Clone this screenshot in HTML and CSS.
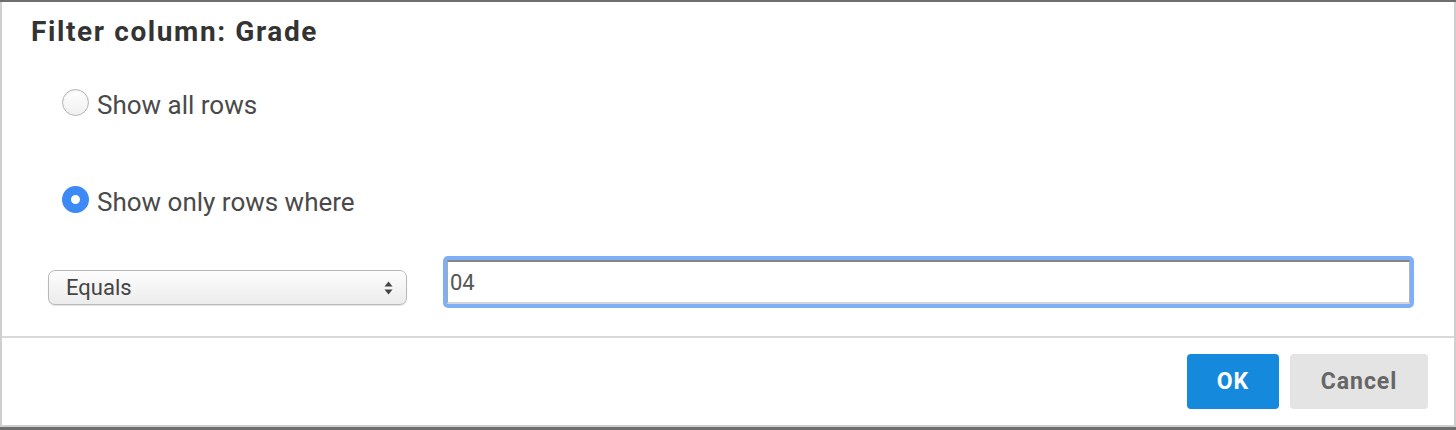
FILE: index.html
```html
<!DOCTYPE html>
<html lang="en">
<head>
    <meta charset="UTF-8">
    <title>Filter column</title>
    <link rel="stylesheet" href="styles.css">
</head>
<body>
    <div class="dialog">
        <div class="dialog-body">
            <h2 class="dialog-title">Filter column: Grade</h2>
            <label class="radio-row first">
                <span class="radio"></span>
                <span class="radio-label">Show all rows</span>
            </label>
            <label class="radio-row">
                <span class="radio checked"></span>
                <span class="radio-label">Show only rows where</span>
            </label>
            <div class="condition-row">
                <div class="select-box">
                    <span>Equals</span>
                    <svg class="select-arrows" width="9" height="14" viewBox="0 0 9 14">
                        <path d="M4.5 0.5 L8.5 5.5 L0.5 5.5 Z" fill="#444"/>
                        <path d="M4.5 13.5 L8.5 8.5 L0.5 8.5 Z" fill="#444"/>
                    </svg>
                </div>
                <div class="value-field">
                    <div class="value-input">04</div>
                </div>
            </div>
        </div>
        <div class="dialog-footer">
            <button type="button" class="btn btn-ok">OK</button>
            <button type="button" class="btn btn-cancel">Cancel</button>
        </div>
    </div>
</body>
</html>
```

FILE: styles.css
```css
body {
    margin: 0;
    padding: 2px 0 3px 0;
    background-color: #6e6e6e;
    font-family: Roboto, 'Liberation Sans', sans-serif;
    color: #444;
}

.dialog {
    background: #FFFFFF;
    border: 2px solid #cfcfcf;
    border-top: none;
    height: 423px;
    box-sizing: content-box;
    display: flex;
    flex-direction: column;
}

.dialog-body {
    height: 334px;
    border-bottom: 2px solid #d9d9d9;
    padding: 0 40px 0 29px;
}

.dialog-title {
    margin: 0;
    padding-top: 16px;
    font-size: 28px;
    font-weight: bold;
    color: #333;
    letter-spacing: 1.6px;
    line-height: 28px;
}

.radio-row {
    display: flex;
    align-items: center;
    margin-left: 31px;
    height: 30px;
}

.radio-row.first {
    margin-top: 44px;
}

.radio-row + .radio-row {
    margin-top: 67px;
}

.radio {
    width: 27px;
    height: 27px;
    border-radius: 50%;
    border: 1px solid #b5b5b5;
    box-sizing: border-box;
    background: linear-gradient(#ffffff, #f0f0f0);
    box-shadow: inset 0 1px 2px rgba(0, 0, 0, 0.08);
    margin-top: -6px;
    margin-right: 8px;
    flex-shrink: 0;
}

.radio.checked {
    border: 9px solid #3d8af7;
    background: #FFFFFF;
    box-shadow: none;
}

.radio-label {
    font-size: 26px;
    color: #4a4a4a;
}

.condition-row {
    display: flex;
    align-items: flex-start;
    margin-top: 39px;
    margin-left: 17px;
}

.select-box {
    width: 359px;
    height: 35px;
    margin-top: 14px;
    box-sizing: border-box;
    border: 1px solid #b9b9b9;
    border-radius: 7px;
    background: linear-gradient(#fdfdfd, #ececec);
    box-shadow: 0 1px 1px rgba(0, 0, 0, 0.12);
    display: flex;
    align-items: center;
    justify-content: space-between;
    padding: 0 13px 0 17px;
    font-size: 22px;
    color: #444;
}

.value-field {
    flex: 1;
    margin-left: 36px;
    border: 4px solid #7fb0f7;
    border-radius: 5px;
    height: 52px;
    box-sizing: border-box;
}

.value-input {
    height: 100%;
    box-sizing: border-box;
    border-top: 2px solid #858585;
    border-left: 1px solid #a8a8a8;
    border-right: 1px solid #b5b5b5;
    border-bottom: 2px solid #d5d5d5;
    padding: 0 0 0 2px;
    display: flex;
    align-items: center;
    font-size: 22px;
    color: #555;
}

.dialog-footer {
    flex: 1;
    display: flex;
    justify-content: flex-end;
    align-items: flex-start;
    padding: 16px 26px 0 0;
    gap: 11px;
}

.btn {
    height: 55px;
    border: none;
    border-radius: 4px;
    font-family: Roboto, 'Liberation Sans', sans-serif;
    font-size: 23px;
    font-weight: bold;
    letter-spacing: 1px;
    cursor: pointer;
}

.btn-ok {
    width: 92px;
    background-color: #1589db;
    color: #FFFFFF;
}

.btn-cancel {
    width: 138px;
    background-color: #e4e4e4;
    color: #666;
}
```
